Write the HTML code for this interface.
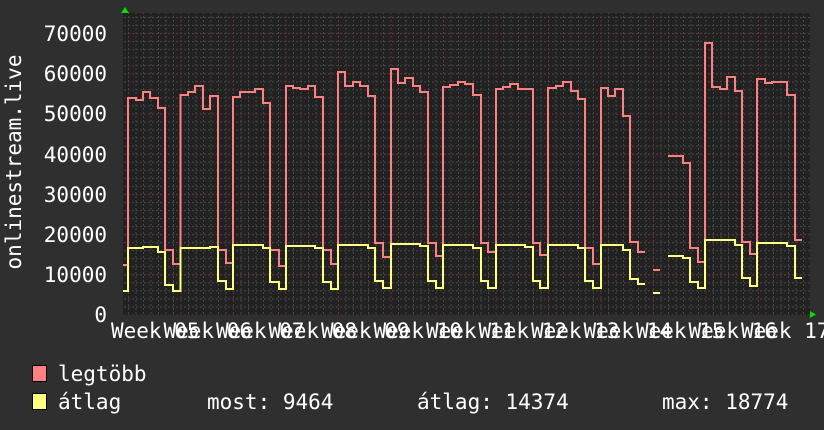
<!DOCTYPE html>
<html><head><meta charset="utf-8"><style>
html,body{margin:0;padding:0;background:#2f2f2f;}
svg{display:block;}
text{font-family:"DejaVu Sans Mono","Liberation Mono",monospace;font-size:21px;fill:#fff;}
</style></head><body>
<svg width="824" height="430" viewBox="0 0 824 430" xmlns="http://www.w3.org/2000/svg">
<defs>
<pattern id="hmin" patternUnits="userSpaceOnUse" x="0" y="314.5" width="4" height="8.04"><rect x="0" y="0" width="2" height="1" fill="#474747"/></pattern>
<pattern id="vmin" patternUnits="userSpaceOnUse" x="128" y="0" width="7.5" height="4"><rect x="0" y="0" width="1" height="2" fill="#474747"/></pattern>
<pattern id="hmaj" patternUnits="userSpaceOnUse" x="0" y="314.5" width="4" height="40.2"><rect x="0" y="0" width="2" height="1" fill="#643434"/></pattern>
<pattern id="vmaj" patternUnits="userSpaceOnUse" x="128" y="0" width="52.5" height="4"><rect x="0" y="0" width="1" height="2" fill="#643434"/></pattern>
</defs>
<rect x="0" y="0" width="824" height="430" fill="#2f2f2f"/>
<rect x="123" y="13" width="687" height="302" fill="#212121"/>
<rect x="123" y="13" width="687" height="302" fill="url(#hmin)"/>
<rect x="123" y="13" width="687" height="302" fill="url(#vmin)"/>
<rect x="123" y="13" width="687" height="302" fill="url(#hmaj)"/>
<rect x="123" y="13" width="687" height="302" fill="url(#vmaj)"/>
<g fill="none" stroke-width="2" stroke-linejoin="miter">
<path stroke="#ff8080" d="M123 265 H128 V98 H136 V100 H143 V92 H150 V98 H158 V108 H165 V250 H173 V264 H180.5 V95 H188 V92 H195 V86 H203 V109 H210 V96 H218 V250 H226 V263 H233 V97 H240 V92 H248 V92 H255 V89 H263 V103 H270 V250 H279 V266 H286 V86 H293 V88 H300 V89 H308 V86 H315 V97 H323 V250 H331 V264 H338 V72 H345 V86 H353 V82 H360 V86 H368 V96 H375 V243 H383 V257 H391 V69 H398 V83 H405 V78 H413 V86 H420 V92 H428 V243 H436 V256 H443 V87 H450 V85 H458 V82 H465 V84 H473 V95 H481 V243 H488 V252 H496 V89 H503 V87 H510 V84 H518 V89 H525 V89 H533 V243 H540 V255 H548 V88 H556 V86 H563 V82 H571 V91 H578 V99 H585 V248 H593 V264 H601 V88 H608 V96 H615 V89 H623 V116 H630 V242 H638 V252 H645 M653 270 H660 M668 156 H683 V163 H690 V248 H698 V262 H705 V43 H712 V87 H720 V89 H727 V77 H735 V91 H742 V242 H750 V254 H757 V79 H765 V83 H772 V82 H780 V82 H787 V95 H795 V240 H802"/>
<path stroke="#ffff80" d="M123 291 H128 V248 H143 V247 H158 V252 H165 V285 H173 V291 H180.5 V248 H210 V247 H218 V281 H226 V289 H233 V245 H263 V248 H270 V282 H279 V289 H286 V246 H315 V248 H323 V282 H331 V289 H338 V245 H368 V248 H375 V281 H383 V288 H391 V244 H420 V246 H428 V281 H436 V288 H443 V245 H473 V248 H481 V281 H488 V288 H496 V245 H525 V247 H533 V281 H540 V288 H548 V245 H578 V248 H585 V281 H593 V288 H601 V245 H623 V250 H630 V279 H638 V284 H645 M653 293 H660 M668 256 H683 V258 H690 V282 H698 V288 H705 V240 H735 V245 H742 V278 H750 V286 H757 V243 H787 V246 H795 V278 H802"/>
</g>
<polygon points="121,13 125,7 129,13" fill="#00e000"/>
<polygon points="810,311 816,314.5 810,318" fill="#00e000"/>
<g text-anchor="end">
<text x="107" y="41">70000</text>
<text x="107" y="81">60000</text>
<text x="107" y="121">50000</text>
<text x="107" y="162">40000</text>
<text x="107" y="202">30000</text>
<text x="107" y="242">20000</text>
<text x="107" y="282">10000</text>
<text x="107" y="322">0</text>
</g>
<text transform="translate(21,162) rotate(-90)" text-anchor="middle">onlinestream.live</text>
<g>
<text x="111" y="338">Week 05</text>
<text x="163.5" y="338">Week 06</text>
<text x="216" y="338">Week 07</text>
<text x="268.5" y="338">Week 08</text>
<text x="321" y="338">Week 09</text>
<text x="373.5" y="338">Week 10</text>
<text x="426" y="338">Week 11</text>
<text x="478.5" y="338">Week 12</text>
<text x="531" y="338">Week 13</text>
<text x="583.5" y="338">Week 14</text>
<text x="636" y="338">Week 15</text>
<text x="688.5" y="338">Week 16</text>
<text x="741" y="338">Week 17</text>
</g>
<rect x="32.5" y="365.5" width="14" height="16" fill="#ff8080" stroke="#000" stroke-width="1"/>
<rect x="32.5" y="393.5" width="14" height="16" fill="#ffff80" stroke="#000" stroke-width="1"/>
<text x="58" y="381">legtöbb</text>
<text x="58" y="409">átlag</text>
<text x="207" y="409">most: 9464</text>
<text x="417" y="409">átlag: 14374</text>
<text x="662" y="409">max: 18774</text>
</svg>
</body></html>
